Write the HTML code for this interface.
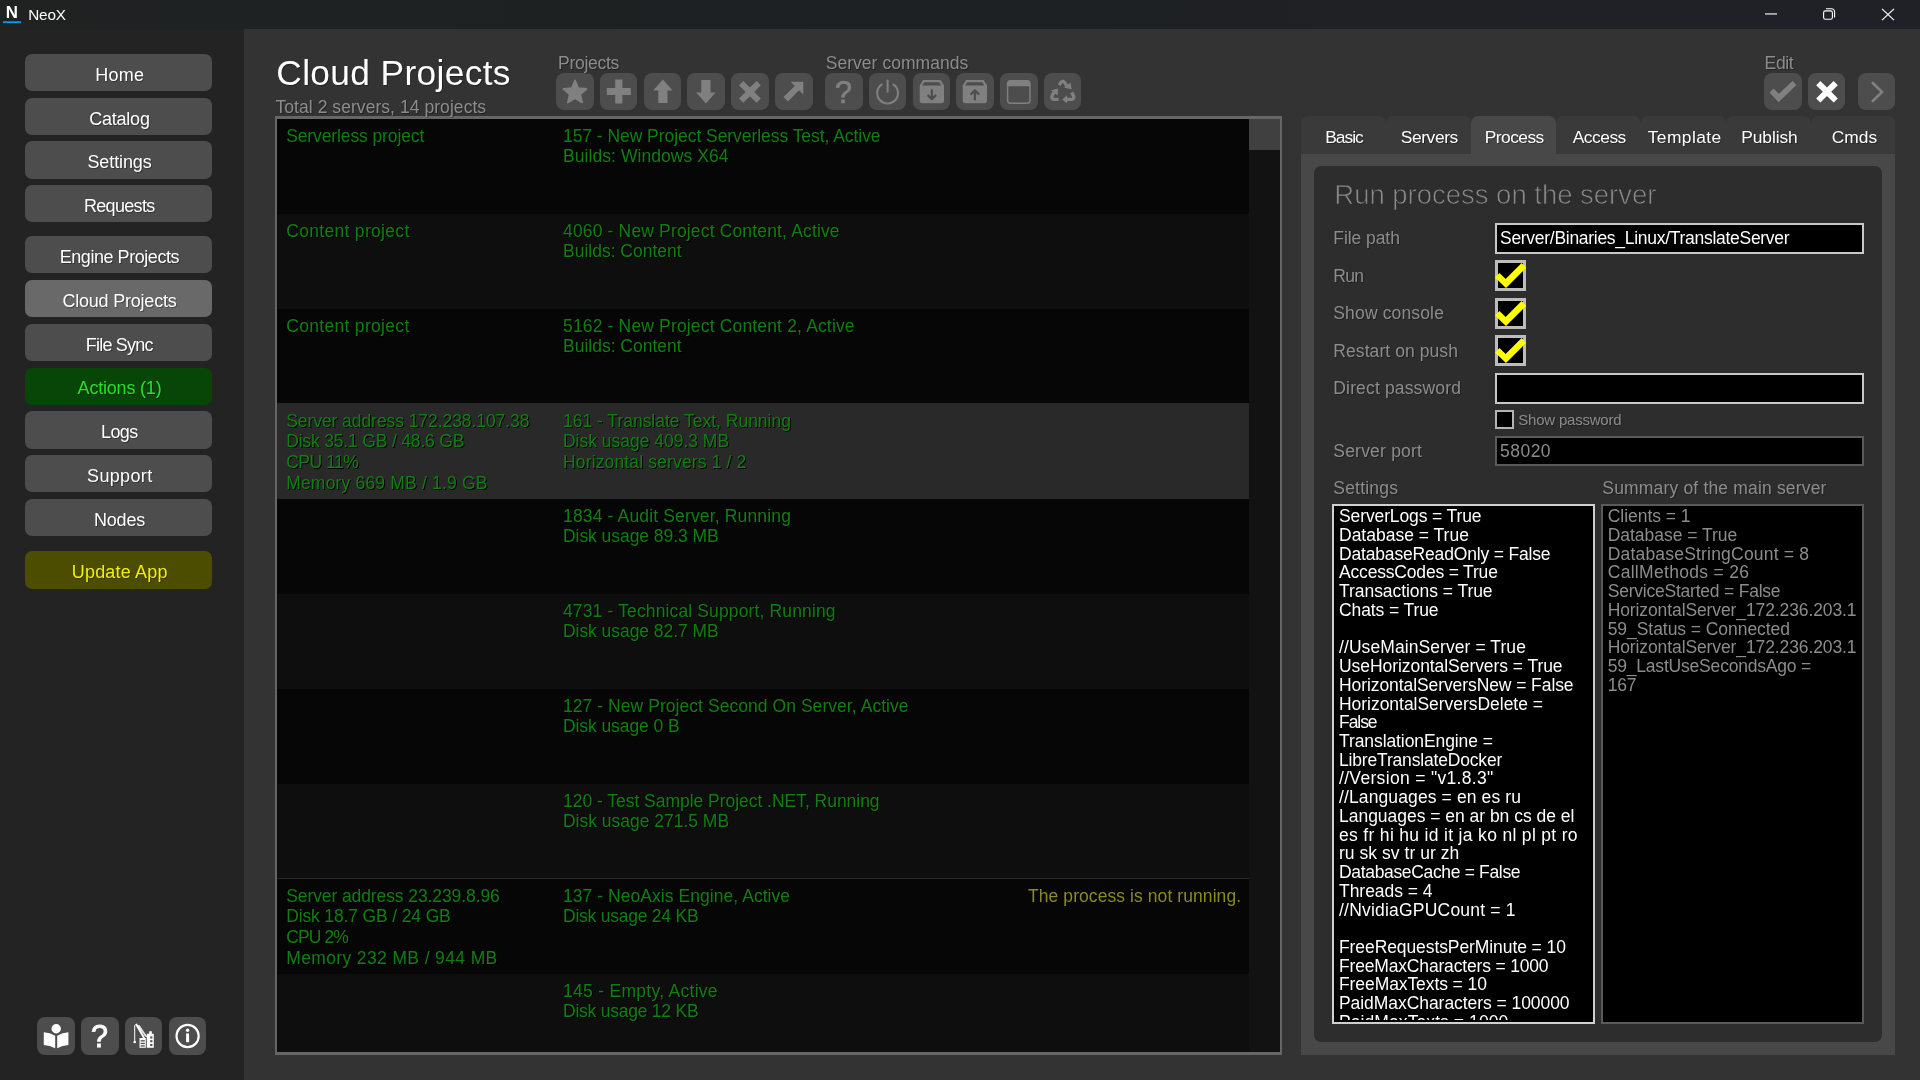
<!DOCTYPE html><html><head><meta charset="utf-8"><title>NeoX</title><style>

html,body{margin:0;padding:0;background:#333;width:1920px;height:1080px;overflow:hidden}
body{position:relative;font-family:"Liberation Sans", sans-serif;}
div,svg,span{position:absolute;}
span{white-space:pre;line-height:20px;}
span{text-shadow:1px 1px 0 rgba(0,0,0,0.32);}
span.sh{text-shadow:1px 1px 0 #000;}
span.ns{text-shadow:none;}
span.thin{-webkit-text-stroke:0.75px #2d2d2d;text-shadow:none;}

</style></head><body>
<div style="left:0px;top:0px;width:1920px;height:29px;background:linear-gradient(90deg,#1f2221 0,#1f2222 15%,#1e2124 50%,#202126 100%);"></div>
<div style="left:0px;top:29px;width:244px;height:1051px;background:#232323;"></div>
<div style="left:25px;top:54px;width:187px;height:37px;background:#4d4d4d;border-radius:7px;"></div>
<div style="left:25px;top:98px;width:187px;height:37px;background:#4d4d4d;border-radius:7px;"></div>
<div style="left:25px;top:141px;width:187px;height:38px;background:#4d4d4d;border-radius:7px;"></div>
<div style="left:25px;top:185px;width:187px;height:37px;background:#4d4d4d;border-radius:7px;"></div>
<div style="left:25px;top:236px;width:187px;height:37px;background:#4d4d4d;border-radius:7px;"></div>
<div style="left:25px;top:280px;width:187px;height:37px;background:#696969;border-radius:7px;"></div>
<div style="left:25px;top:324px;width:187px;height:37px;background:#4d4d4d;border-radius:7px;"></div>
<div style="left:25px;top:368px;width:187px;height:37px;background:#074607;border-radius:7px;"></div>
<div style="left:25px;top:411px;width:187px;height:38px;background:#4d4d4d;border-radius:7px;"></div>
<div style="left:25px;top:455px;width:187px;height:37px;background:#4d4d4d;border-radius:7px;"></div>
<div style="left:25px;top:499px;width:187px;height:37px;background:#4d4d4d;border-radius:7px;"></div>
<div style="left:25px;top:551px;width:187px;height:38px;background:#4d4d00;border-radius:7px;"></div>
<div style="left:37px;top:1017px;width:38px;height:38px;background:#4d4d4d;border-radius:8px;"></div>
<div style="left:81px;top:1017px;width:38px;height:38px;background:#4d4d4d;border-radius:8px;"></div>
<div style="left:125px;top:1017px;width:37px;height:38px;background:#4d4d4d;border-radius:8px;"></div>
<div style="left:169px;top:1017px;width:37px;height:38px;background:#4d4d4d;border-radius:8px;"></div>
<div style="left:556px;top:73px;width:37.5px;height:37px;background:#4d4d4d;border-radius:8px;"></div>
<div style="left:599.8px;top:73px;width:37.5px;height:37px;background:#4d4d4d;border-radius:8px;"></div>
<div style="left:643.6px;top:73px;width:37.5px;height:37px;background:#4d4d4d;border-radius:8px;"></div>
<div style="left:687.4px;top:73px;width:37.5px;height:37px;background:#4d4d4d;border-radius:8px;"></div>
<div style="left:731.2px;top:73px;width:37.5px;height:37px;background:#4d4d4d;border-radius:8px;"></div>
<div style="left:775px;top:73px;width:37.5px;height:37px;background:#4d4d4d;border-radius:8px;"></div>
<div style="left:825px;top:73px;width:37.5px;height:37px;background:#4d4d4d;border-radius:8px;"></div>
<div style="left:868.8px;top:73px;width:37.5px;height:37px;background:#4d4d4d;border-radius:8px;"></div>
<div style="left:912.5px;top:73px;width:37.5px;height:37px;background:#4d4d4d;border-radius:8px;"></div>
<div style="left:956.3px;top:73px;width:37.5px;height:37px;background:#4d4d4d;border-radius:8px;"></div>
<div style="left:1000px;top:73px;width:37.5px;height:37px;background:#4d4d4d;border-radius:8px;"></div>
<div style="left:1043.8px;top:73px;width:37.5px;height:37px;background:#4d4d4d;border-radius:8px;"></div>
<div style="left:1764px;top:73px;width:37.5px;height:37px;background:#4d4d4d;border-radius:8px;"></div>
<div style="left:1807.5px;top:73px;width:37.5px;height:37px;background:#4d4d4d;border-radius:8px;"></div>
<div style="left:1857.5px;top:73px;width:37.5px;height:37px;background:#4d4d4d;border-radius:8px;"></div>
<div style="left:275px;top:116px;width:1007px;height:939px;background:#666;"></div>
<div style="left:277px;top:119px;width:1003px;height:933px;background:#050505;"></div>
<div style="left:277px;top:119px;width:972px;height:95px;background:#060606;"></div>
<div style="left:277px;top:214px;width:972px;height:95px;background:#0e0e0e;"></div>
<div style="left:277px;top:309px;width:972px;height:95px;background:#060606;"></div>
<div style="left:277px;top:403px;width:972px;height:96px;background:#292929;"></div>
<div style="left:277px;top:499px;width:972px;height:95px;background:#060606;"></div>
<div style="left:277px;top:594px;width:972px;height:95px;background:#0e0e0e;"></div>
<div style="left:277px;top:689px;width:972px;height:95px;background:#060606;"></div>
<div style="left:277px;top:784px;width:972px;height:95px;background:#0e0e0e;"></div>
<div style="left:277px;top:879px;width:972px;height:95px;background:#060606;"></div>
<div style="left:277px;top:974px;width:972px;height:78px;background:#0e0e0e;"></div>
<div style="left:277px;top:878px;width:972px;height:1px;background:#2a2a2a;"></div>
<div style="left:1249px;top:119px;width:31px;height:933px;background:#121212;"></div>
<div style="left:1249px;top:119px;width:31px;height:31px;background:#404040;"></div>
<div style="left:1301px;top:154px;width:594px;height:901px;background:#484848;"></div>
<div style="left:1301px;top:116px;width:85px;height:38px;background:#3a3a3a;border-radius:7px 7px 0 0;"></div>
<div style="left:1386px;top:116px;width:85px;height:38px;background:#3a3a3a;border-radius:7px 7px 0 0;"></div>
<div style="left:1471px;top:116px;width:85px;height:38px;background:#484848;border-radius:7px 7px 0 0;"></div>
<div style="left:1556px;top:116px;width:85px;height:38px;background:#3a3a3a;border-radius:7px 7px 0 0;"></div>
<div style="left:1641px;top:116px;width:85px;height:38px;background:#3a3a3a;border-radius:7px 7px 0 0;"></div>
<div style="left:1726px;top:116px;width:85px;height:38px;background:#3a3a3a;border-radius:7px 7px 0 0;"></div>
<div style="left:1811px;top:116px;width:84px;height:38px;background:#3a3a3a;border-radius:7px 7px 0 0;"></div>
<div style="left:1314px;top:166px;width:568px;height:876px;background:#2d2d2d;border-radius:7px;"></div>
<div style="left:1495px;top:223px;width:369px;height:31px;background:#c8c8c8;"></div>
<div style="left:1497px;top:225px;width:365px;height:27px;background:#000;"></div>
<div style="left:1495px;top:260px;width:31px;height:31px;background:#bcbcbc;"></div>
<div style="left:1498px;top:263px;width:25px;height:25px;background:#000;"></div>
<div style="left:1495px;top:298px;width:31px;height:31px;background:#bcbcbc;"></div>
<div style="left:1498px;top:301px;width:25px;height:25px;background:#000;"></div>
<div style="left:1495px;top:335px;width:31px;height:31px;background:#bcbcbc;"></div>
<div style="left:1498px;top:338px;width:25px;height:25px;background:#000;"></div>
<div style="left:1495px;top:373px;width:369px;height:30.5px;background:#c8c8c8;"></div>
<div style="left:1497px;top:375px;width:365px;height:26.5px;background:#000;"></div>
<div style="left:1495px;top:410px;width:18.5px;height:19px;background:#b4b4b4;"></div>
<div style="left:1497px;top:412px;width:14.5px;height:15px;background:#000;"></div>
<div style="left:1495px;top:435.7px;width:369px;height:30px;background:#5a5a5a;"></div>
<div style="left:1497px;top:437.7px;width:365px;height:26px;background:#000;"></div>
<div style="left:1332px;top:504px;width:263px;height:519.5px;background:#d0d0d0;"></div>
<div style="left:1334px;top:506px;width:259px;height:515.5px;background:#000;"></div>
<div style="left:1601px;top:504px;width:263px;height:519.5px;background:#5a5a5a;"></div>
<div style="left:1603px;top:506px;width:259px;height:515.5px;background:#000;"></div>
<div style="left:0;top:0;width:1920px;height:1080px;will-change:transform">
<span id="t0" class="ns" style="top:4.70px;font-size:15.3px;color:#fff;letter-spacing:-0.222px;left:28.3px;">NeoX</span>
<span id="t1" class="" style="top:64.51px;font-size:18px;color:#fff;letter-spacing:0.195px;left:-30.3026px;width:300px;text-align:center;">Home</span>
<span id="t2" class="" style="top:108.51px;font-size:18px;color:#fff;letter-spacing:-0.241px;left:-30.5206px;width:300px;text-align:center;">Catalog</span>
<span id="t3" class="" style="top:151.51px;font-size:18px;color:#fff;letter-spacing:-0.100px;left:-30.4498px;width:300px;text-align:center;">Settings</span>
<span id="t4" class="" style="top:195.51px;font-size:18px;color:#fff;letter-spacing:-0.671px;left:-30.7355px;width:300px;text-align:center;">Requests</span>
<span id="t5" class="" style="top:246.51px;font-size:18px;color:#fff;letter-spacing:-0.445px;left:-30.6224px;width:300px;text-align:center;">Engine Projects</span>
<span id="t6" class="" style="top:290.51px;font-size:18px;color:#fff;letter-spacing:-0.209px;left:-30.5043px;width:300px;text-align:center;">Cloud Projects</span>
<span id="t7" class="" style="top:334.51px;font-size:18px;color:#fff;letter-spacing:-0.804px;left:-30.802px;width:300px;text-align:center;">File Sync</span>
<span id="t8" class="" style="top:377.56px;font-size:18px;color:#26e026;letter-spacing:-0.193px;left:-30.4966px;width:300px;text-align:center;">Actions (1)</span>
<span id="t9" class="" style="top:421.51px;font-size:18px;color:#fff;letter-spacing:-0.566px;left:-30.6828px;width:300px;text-align:center;">Logs</span>
<span id="t10" class="" style="top:465.51px;font-size:18px;color:#fff;letter-spacing:0.342px;left:-30.2289px;width:300px;text-align:center;">Support</span>
<span id="t11" class="" style="top:509.51px;font-size:18px;color:#fff;letter-spacing:-0.170px;left:-30.4852px;width:300px;text-align:center;">Nodes</span>
<span id="t12" class="" style="top:561.51px;font-size:18px;color:#f2f200;letter-spacing:0.169px;left:-30.3155px;width:300px;text-align:center;">Update App</span>
<span id="t13" class="light" style="top:62.77px;font-size:35.3px;color:#fff;letter-spacing:0.358px;left:276.3px;">Cloud Projects</span>
<span id="t14" class="" style="top:96.94px;font-size:17.5px;color:#8c8c8c;letter-spacing:0.055px;left:275.5px;">Total 2 servers, 14 projects</span>
<span id="t15" class="" style="top:52.94px;font-size:17.5px;color:#8c8c8c;letter-spacing:-0.274px;left:558px;">Projects</span>
<span id="t16" class="" style="top:52.94px;font-size:17.5px;color:#8c8c8c;letter-spacing:0.043px;left:825.7px;">Server commands</span>
<span id="t17" class="" style="top:53.24px;font-size:17.5px;color:#8c8c8c;letter-spacing:-0.352px;left:1764.6px;">Edit</span>
<span id="t18" class="sh" style="top:126.24px;font-size:17.5px;color:#0f800f;letter-spacing:-0.115px;left:286.2px;">Serverless project</span>
<span id="t19" class="sh" style="top:126.24px;font-size:17.5px;color:#0f800f;letter-spacing:-0.052px;left:563px;">157 - New Project Serverless Test, Active</span>
<span id="t20" class="sh" style="top:146.34px;font-size:17.5px;color:#0f800f;letter-spacing:0.067px;left:563px;">Builds: Windows X64</span>
<span id="t21" class="sh" style="top:221.24px;font-size:17.5px;color:#0f800f;letter-spacing:0.315px;left:286.2px;">Content project</span>
<span id="t22" class="sh" style="top:221.24px;font-size:17.5px;color:#0f800f;letter-spacing:0.158px;left:563px;">4060 - New Project Content, Active</span>
<span id="t23" class="sh" style="top:241.34px;font-size:17.5px;color:#0f800f;letter-spacing:-0.006px;left:563px;">Builds: Content</span>
<span id="t24" class="sh" style="top:316.24px;font-size:17.5px;color:#0f800f;letter-spacing:0.315px;left:286.2px;">Content project</span>
<span id="t25" class="sh" style="top:316.24px;font-size:17.5px;color:#0f800f;letter-spacing:0.160px;left:563px;">5162 - New Project Content 2, Active</span>
<span id="t26" class="sh" style="top:336.34px;font-size:17.5px;color:#0f800f;letter-spacing:-0.006px;left:563px;">Builds: Content</span>
<span id="t27" class="sh" style="top:411.24px;font-size:17.5px;color:#0f800f;letter-spacing:-0.067px;left:286.2px;">Server address 172.238.107.38</span>
<span id="t28" class="sh" style="top:431.34px;font-size:17.5px;color:#0f800f;letter-spacing:-0.171px;left:286.2px;">Disk 35.1 GB / 48.6 GB</span>
<span id="t29" class="sh" style="top:452.04px;font-size:17.5px;color:#0f800f;letter-spacing:-0.491px;left:286.2px;">CPU 11%</span>
<span id="t30" class="sh" style="top:472.94px;font-size:17.5px;color:#0f800f;letter-spacing:0.184px;left:286.2px;">Memory 669 MB / 1.9 GB</span>
<span id="t31" class="sh" style="top:411.24px;font-size:17.5px;color:#0f800f;letter-spacing:-0.014px;left:563px;">161 - Translate Text, Running</span>
<span id="t32" class="sh" style="top:431.34px;font-size:17.5px;color:#0f800f;letter-spacing:-0.014px;left:563px;">Disk usage 409.3 MB</span>
<span id="t33" class="sh" style="top:452.04px;font-size:17.5px;color:#0f800f;letter-spacing:0.146px;left:563px;">Horizontal servers 1 / 2</span>
<span id="t34" class="sh" style="top:506.24px;font-size:17.5px;color:#0f800f;letter-spacing:0.153px;left:563px;">1834 - Audit Server, Running</span>
<span id="t35" class="sh" style="top:526.34px;font-size:17.5px;color:#0f800f;letter-spacing:-0.059px;left:563px;">Disk usage 89.3 MB</span>
<span id="t36" class="sh" style="top:601.24px;font-size:17.5px;color:#0f800f;letter-spacing:0.137px;left:563px;">4731 - Technical Support, Running</span>
<span id="t37" class="sh" style="top:621.34px;font-size:17.5px;color:#0f800f;letter-spacing:-0.059px;left:563px;">Disk usage 82.7 MB</span>
<span id="t38" class="sh" style="top:696.24px;font-size:17.5px;color:#0f800f;letter-spacing:0.054px;left:563px;">127 - New Project Second On Server, Active</span>
<span id="t39" class="sh" style="top:716.34px;font-size:17.5px;color:#0f800f;letter-spacing:-0.085px;left:563px;">Disk usage 0 B</span>
<span id="t40" class="sh" style="top:791.24px;font-size:17.5px;color:#0f800f;letter-spacing:-0.031px;left:563px;">120 - Test Sample Project .NET, Running</span>
<span id="t41" class="sh" style="top:811.34px;font-size:17.5px;color:#0f800f;letter-spacing:-0.014px;left:563px;">Disk usage 271.5 MB</span>
<span id="t42" class="sh" style="top:886.24px;font-size:17.5px;color:#0f800f;letter-spacing:-0.095px;left:286.2px;">Server address 23.239.8.96</span>
<span id="t43" class="sh" style="top:906.34px;font-size:17.5px;color:#0f800f;letter-spacing:-0.142px;left:286.2px;">Disk 18.7 GB / 24 GB</span>
<span id="t44" class="sh" style="top:927.04px;font-size:17.5px;color:#0f800f;letter-spacing:-0.902px;left:286.2px;">CPU 2%</span>
<span id="t45" class="sh" style="top:947.94px;font-size:17.5px;color:#0f800f;letter-spacing:0.372px;left:286.2px;">Memory 232 MB / 944 MB</span>
<span id="t46" class="sh" style="top:886.24px;font-size:17.5px;color:#0f800f;letter-spacing:0.052px;left:563px;">137 - NeoAxis Engine, Active</span>
<span id="t47" class="sh" style="top:906.34px;font-size:17.5px;color:#0f800f;letter-spacing:-0.234px;left:563px;">Disk usage 24 KB</span>
<span id="t48" class="sh" style="top:981.24px;font-size:17.5px;color:#0f800f;letter-spacing:0.285px;left:563px;">145 - Empty, Active</span>
<span id="t49" class="sh" style="top:1001.34px;font-size:17.5px;color:#0f800f;letter-spacing:-0.234px;left:563px;">Disk usage 12 KB</span>
<span id="t50" class="sh" style="top:886.24px;font-size:17.5px;color:#8c8c1e;letter-spacing:0.077px;left:1028px;">The process is not running.</span>
<span id="t51" class="" style="top:126.97px;font-size:17.4px;color:#fff;letter-spacing:-0.983px;left:1194.01px;width:300px;text-align:center;">Basic</span>
<span id="t52" class="" style="top:126.97px;font-size:17.4px;color:#fff;letter-spacing:-0.387px;left:1279.31px;width:300px;text-align:center;">Servers</span>
<span id="t53" class="" style="top:126.97px;font-size:17.4px;color:#fff;letter-spacing:-0.538px;left:1364.23px;width:300px;text-align:center;">Process</span>
<span id="t54" class="" style="top:126.97px;font-size:17.4px;color:#fff;letter-spacing:-0.492px;left:1449.25px;width:300px;text-align:center;">Access</span>
<span id="t55" class="" style="top:126.97px;font-size:17.4px;color:#fff;letter-spacing:0.432px;left:1534.72px;width:300px;text-align:center;">Template</span>
<span id="t56" class="" style="top:126.97px;font-size:17.4px;color:#fff;letter-spacing:-0.074px;left:1619.46px;width:300px;text-align:center;">Publish</span>
<span id="t57" class="" style="top:126.97px;font-size:17.4px;color:#fff;letter-spacing:0.059px;left:1704.53px;width:300px;text-align:center;">Cmds</span>
<span id="t58" class="thin" style="top:184.67px;font-size:27.5px;color:#8a8a8a;letter-spacing:-0.018px;left:1334.3px;">Run process on the server</span>
<span id="t59" class="" style="top:228.24px;font-size:17.5px;color:#8c8c8c;letter-spacing:-0.066px;left:1333.3px;">File path</span>
<span id="t60" class="" style="top:265.94px;font-size:17.5px;color:#8c8c8c;letter-spacing:-0.755px;left:1333.3px;">Run</span>
<span id="t61" class="" style="top:303.24px;font-size:17.5px;color:#8c8c8c;letter-spacing:0.148px;left:1333.3px;">Show console</span>
<span id="t62" class="" style="top:340.94px;font-size:17.5px;color:#8c8c8c;letter-spacing:0.075px;left:1333.3px;">Restart on push</span>
<span id="t63" class="" style="top:378.24px;font-size:17.5px;color:#8c8c8c;letter-spacing:0.152px;left:1333.3px;">Direct password</span>
<span id="t64" class="" style="top:440.94px;font-size:17.5px;color:#8c8c8c;letter-spacing:0.204px;left:1333.3px;">Server port</span>
<span id="t65" class="" style="top:477.94px;font-size:17.5px;color:#8c8c8c;letter-spacing:0.195px;left:1333.3px;">Settings</span>
<span id="t66" class="" style="top:477.94px;font-size:17.5px;color:#8c8c8c;letter-spacing:0.172px;left:1602.3px;">Summary of the main server</span>
<span id="t67" class="" style="top:228.24px;font-size:17.5px;color:#fff;letter-spacing:-0.286px;left:1500px;">Server/Binaries_Linux/TranslateServer</span>
<span id="t68" class="" style="top:409.50px;font-size:15px;color:#8c8c8c;letter-spacing:-0.216px;left:1518.3px;">Show password</span>
<span id="t69" class="" style="top:440.94px;font-size:17.5px;color:#8c8c8c;letter-spacing:0.482px;left:1500px;">58020</span>
<span id="t70" class="" style="top:506.24px;font-size:17.5px;color:#fff;letter-spacing:-0.116px;left:1339px;">ServerLogs = True</span>
<span id="t71" class="" style="top:524.97px;font-size:17.5px;color:#fff;letter-spacing:0.002px;left:1339px;">Database = True</span>
<span id="t72" class="" style="top:543.70px;font-size:17.5px;color:#fff;letter-spacing:-0.168px;left:1339px;">DatabaseReadOnly = False</span>
<span id="t73" class="" style="top:562.43px;font-size:17.5px;color:#fff;letter-spacing:-0.180px;left:1339px;">AccessCodes = True</span>
<span id="t74" class="" style="top:581.16px;font-size:17.5px;color:#fff;letter-spacing:-0.050px;left:1339px;">Transactions = True</span>
<span id="t75" class="" style="top:599.89px;font-size:17.5px;color:#fff;letter-spacing:-0.099px;left:1339px;">Chats = True</span>
<span id="t76" class="" style="top:637.35px;font-size:17.5px;color:#fff;letter-spacing:0.077px;left:1339px;">//UseMainServer = True</span>
<span id="t77" class="" style="top:656.08px;font-size:17.5px;color:#fff;letter-spacing:-0.060px;left:1339px;">UseHorizontalServers = True</span>
<span id="t78" class="" style="top:674.81px;font-size:17.5px;color:#fff;letter-spacing:-0.083px;left:1339px;">HorizontalServersNew = False</span>
<span id="t79" class="" style="top:693.54px;font-size:17.5px;color:#fff;letter-spacing:-0.035px;left:1339px;">HorizontalServersDelete =</span>
<span id="t80" class="" style="top:712.27px;font-size:17.5px;color:#fff;letter-spacing:-1.049px;left:1339px;">False</span>
<span id="t81" class="" style="top:731.00px;font-size:17.5px;color:#fff;letter-spacing:-0.089px;left:1339px;">TranslationEngine =</span>
<span id="t82" class="" style="top:749.73px;font-size:17.5px;color:#fff;letter-spacing:-0.177px;left:1339px;">LibreTranslateDocker</span>
<span id="t83" class="" style="top:768.46px;font-size:17.5px;color:#fff;letter-spacing:0.324px;left:1339px;">//Version = &quot;v1.8.3&quot;</span>
<span id="t84" class="" style="top:787.19px;font-size:17.5px;color:#fff;letter-spacing:0.114px;left:1339px;">//Languages = en es ru</span>
<span id="t85" class="" style="top:805.92px;font-size:17.5px;color:#fff;letter-spacing:-0.023px;left:1339px;">Languages = en ar bn cs de el</span>
<span id="t86" class="" style="top:824.65px;font-size:17.5px;color:#fff;letter-spacing:0.323px;left:1339px;">es fr hi hu id it ja ko nl pl pt ro</span>
<span id="t87" class="" style="top:843.38px;font-size:17.5px;color:#fff;letter-spacing:0.043px;left:1339px;">ru sk sv tr ur zh</span>
<span id="t88" class="" style="top:862.11px;font-size:17.5px;color:#fff;letter-spacing:-0.333px;left:1339px;">DatabaseCache = False</span>
<span id="t89" class="" style="top:880.84px;font-size:17.5px;color:#fff;letter-spacing:-0.028px;left:1339px;">Threads = 4</span>
<span id="t90" class="" style="top:899.57px;font-size:17.5px;color:#fff;letter-spacing:0.208px;left:1339px;">//NvidiaGPUCount = 1</span>
<span id="t91" class="" style="top:937.03px;font-size:17.5px;color:#fff;letter-spacing:-0.088px;left:1339px;">FreeRequestsPerMinute = 10</span>
<span id="t92" class="" style="top:955.76px;font-size:17.5px;color:#fff;letter-spacing:-0.170px;left:1339px;">FreeMaxCharacters = 1000</span>
<span id="t93" class="" style="top:974.49px;font-size:17.5px;color:#fff;letter-spacing:-0.087px;left:1339px;">FreeMaxTexts = 10</span>
<span id="t94" class="" style="top:993.22px;font-size:17.5px;color:#fff;letter-spacing:-0.057px;left:1339px;">PaidMaxCharacters = 100000</span>
<span id="t95" class="" style="top:1011.95px;font-size:17.5px;color:#fff;letter-spacing:0.083px;left:1339px;">PaidMaxTexts = 1000</span>
<span id="t96" class="" style="top:506.24px;font-size:17.5px;color:#8c8c8c;letter-spacing:-0.027px;left:1607.7px;">Clients = 1</span>
<span id="t97" class="" style="top:524.97px;font-size:17.5px;color:#8c8c8c;letter-spacing:-0.020px;left:1607.7px;">Database = True</span>
<span id="t98" class="" style="top:543.70px;font-size:17.5px;color:#8c8c8c;letter-spacing:0.195px;left:1607.7px;">DatabaseStringCount = 8</span>
<span id="t99" class="" style="top:562.43px;font-size:17.5px;color:#8c8c8c;letter-spacing:0.307px;left:1607.7px;">CallMethods = 26</span>
<span id="t100" class="" style="top:581.16px;font-size:17.5px;color:#8c8c8c;letter-spacing:-0.220px;left:1607.7px;">ServiceStarted = False</span>
<span id="t101" class="" style="top:599.89px;font-size:17.5px;color:#8c8c8c;letter-spacing:-0.106px;left:1607.7px;">HorizontalServer_172.236.203.1</span>
<span id="t102" class="" style="top:618.62px;font-size:17.5px;color:#8c8c8c;letter-spacing:-0.055px;left:1607.7px;">59_Status = Connected</span>
<span id="t103" class="" style="top:637.35px;font-size:17.5px;color:#8c8c8c;letter-spacing:-0.106px;left:1607.7px;">HorizontalServer_172.236.203.1</span>
<span id="t104" class="" style="top:656.08px;font-size:17.5px;color:#8c8c8c;letter-spacing:-0.196px;left:1607.7px;">59_LastUseSecondsAgo =</span>
<span id="t105" class="" style="top:674.81px;font-size:17.5px;color:#8c8c8c;letter-spacing:-0.152px;left:1607.7px;">167</span>
<svg style="left:3px;top:4px" width="20" height="20" viewBox="0 0 20 20"><text x="8.85" y="14" font-family='"Liberation Sans",sans-serif' font-weight="bold" font-size="15.6" text-anchor="middle" fill="#fff" textLength="12.2" lengthAdjust="spacingAndGlyphs">N</text><rect x="0" y="17.3" width="18" height="1.8" fill="#0a9bf0"/></svg>
<svg style="left:1765px;top:13px" width="12" height="2" viewBox="0 0 12 2"><rect x="0" y="0.4" width="12" height="1.1" fill="#fff"/></svg>
<svg style="left:1823px;top:8px" width="14" height="13" viewBox="0 0 14 13"><rect x="0.6" y="2.9" width="8.8" height="8.4" rx="1.9" fill="none" stroke="#fff" stroke-width="1.1"/><path d="M3 0.8h5.6a3 3 0 0 1 3 3v5.6" fill="none" stroke="#fff" stroke-width="1.1"/></svg>
<svg style="left:1881px;top:8px" width="14" height="13" viewBox="0 0 14 13"><path d="M1 0.8L13 12.2M13 0.8L1 12.2" stroke="#fff" stroke-width="1.15" fill="none"/></svg>
<svg style="left:1495px;top:260px" width="32" height="31" viewBox="0 0 32 31"><path d="M0 17.5L4.5 13.1L10.6 19L26.6 3.1L31.1 7.9L11 28.1z" fill="#ffff00"/></svg>
<svg style="left:1495px;top:298px" width="32" height="31" viewBox="0 0 32 31"><path d="M0 17.5L4.5 13.1L10.6 19L26.6 3.1L31.1 7.9L11 28.1z" fill="#ffff00"/></svg>
<svg style="left:1495px;top:335px" width="32" height="31" viewBox="0 0 32 31"><path d="M0 17.5L4.5 13.1L10.6 19L26.6 3.1L31.1 7.9L11 28.1z" fill="#ffff00"/></svg>
<svg style="left:556px;top:73px" width="37.5" height="37.5" viewBox="0 0 37.5 37.5"><polygon points="19.00,7.30 22.29,15.07 30.70,15.80 24.33,21.33 26.23,29.55 19.00,25.20 11.77,29.55 13.67,21.33 7.30,15.80 15.71,15.07" fill="#808080" stroke="#808080" stroke-width="1.6" stroke-linejoin="round"/></svg>
<svg style="left:599.8px;top:73px" width="37.5" height="37.5" viewBox="0 0 37.5 37.5"><path d="M15.2 6.5h7.2v8.4h8.4v7.2h-8.4v8.4h-7.2v-8.4H6.8v-7.2h8.4z" fill="#808080"/></svg>
<svg style="left:643.6px;top:73px" width="37.5" height="37.5" viewBox="0 0 37.5 37.5"><path d="M18.9 6.5L28.6 17.4H23.5V30H14.3V17.4H9.2z" fill="#808080"/></svg>
<svg style="left:687.4px;top:73px" width="37.5" height="37.5" viewBox="0 0 37.5 37.5"><path d="M18.9 30.5L28.6 19.6H23.5V7H14.3V19.6H9.2z" fill="#808080"/></svg>
<svg style="left:731.2px;top:73px" width="37.5" height="37.5" viewBox="0 0 37.5 37.5"><path d="M8 12.3L12.3 8L18.9 14.6L25.5 8L29.8 12.3L23.2 18.9L29.8 25.5L25.5 29.8L18.9 23.2L12.3 29.8L8 25.5L14.6 18.9z" fill="#808080"/></svg>
<svg style="left:775px;top:73px" width="37.5" height="37.5" viewBox="0 0 37.5 37.5"><path d="M15.5 8.7H28.3V21.5L24 17.2L13 28.5L8.5 24L19.8 13z" fill="#808080"/></svg>
<svg style="left:825px;top:73px" width="37.5" height="37.5" viewBox="0 0 37.5 37.5"><text x="18.4" y="29.7" font-family='"Liberation Sans",sans-serif' font-size="30.5" text-anchor="middle" fill="#808080" stroke="#808080" stroke-width="0.7">?</text></svg>
<svg style="left:868.8px;top:73px" width="37.5" height="37.5" viewBox="0 0 37.5 37.5"><path d="M12.6 11.6A10.4 10.4 0 1 0 24.6 11.6" fill="none" stroke="#808080" stroke-width="2.1" stroke-linecap="round"/><path d="M18.6 7.5V18.6" stroke="#808080" stroke-width="2.1" stroke-linecap="round"/></svg>
<svg style="left:912.5px;top:73px" width="37.5" height="37.5" viewBox="0 0 37.5 37.5"><path d="M10 7H27.5L31 12.5V27.5a2.7 2.7 0 0 1-2.7 2.7H9.4a2.7 2.7 0 0 1-2.7-2.7V12.5z" fill="#808080"/><path d="M11.2 9.3H26.3L28.3 12.6H9.2z" fill="#4d4d4d"/><path d="M18.85 17V26M15.2 22.6L18.85 26.2L22.5 22.6" fill="none" stroke="#4d4d4d" stroke-width="2.2" stroke-linecap="round" stroke-linejoin="round"/></svg>
<svg style="left:956.3px;top:73px" width="37.5" height="37.5" viewBox="0 0 37.5 37.5"><path d="M10 7H27.5L31 12.5V27.5a2.7 2.7 0 0 1-2.7 2.7H9.4a2.7 2.7 0 0 1-2.7-2.7V12.5z" fill="#808080"/><path d="M11.2 9.3H26.3L28.3 12.6H9.2z" fill="#4d4d4d"/><path d="M18.85 26.6V17.6M15.2 21L18.85 17.4L22.5 21" fill="none" stroke="#4d4d4d" stroke-width="2.2" stroke-linecap="round" stroke-linejoin="round"/></svg>
<svg style="left:1000px;top:73px" width="37.5" height="37.5" viewBox="0 0 37.5 37.5"><rect x="7.6" y="7.6" width="22.4" height="22.6" rx="3" fill="none" stroke="#808080" stroke-width="1.4"/><path d="M7.6 13.2V10.6a3 3 0 0 1 3-3H27a3 3 0 0 1 3 3V13.2z" fill="#808080"/></svg>
<svg style="left:1043.8px;top:73px" width="37.5" height="37.5" viewBox="0 0 37.5 37.5"><g fill="none" stroke="#808080" stroke-width="3.3" stroke-linejoin="round"><path d="M15.2 12.2L17.2 9.2Q18.8 7.2 20.4 9.2L23.4 14"/><path d="M27.6 19.4L29.6 22.8Q30.6 26 27.4 26.4H22.6"/><path d="M14.6 26.4H10.2Q7 26 8 22.8L10.4 18.8"/></g><g fill="#808080"><path d="M20.2 14.8L27.6 16.2L26.6 9.4z"/><path d="M23.2 22.2V30.6L18.2 26.4z"/><path d="M7 17.2L14.2 15.4L13.6 22.4z"/></g></svg>
<svg style="left:1764px;top:73px" width="37.5" height="37.5" viewBox="0 0 37.5 37.5"><path d="M5.5 19.5L9.6 15.4L14.8 20.8L28.6 8L32.4 12L14.6 29.2z" fill="#808080"/></svg>
<svg style="left:1807.5px;top:73px" width="37.5" height="37.5" viewBox="0 0 37.5 37.5"><path d="M8.2 12.2L12.4 8L19 14.6L25.6 8L29.8 12.2L23.2 18.8L29.8 25.4L25.6 29.6L19 23L12.4 29.6L8.2 25.4L14.8 18.8z" fill="#fff"/></svg>
<svg style="left:1857.5px;top:73px" width="37.5" height="37.5" viewBox="0 0 37.5 37.5"><path d="M14 9.3L24 19L14 28.7" fill="none" stroke="#808080" stroke-width="2.6"/></svg>
<svg style="left:37px;top:1017px" width="38" height="38" viewBox="0 0 38 38"><circle cx="19.2" cy="11.7" r="4.7" fill="#fff"/><path d="M6.8 15.2Q13 15.4 18.2 18.8V31.2Q13 28.2 6.8 28z" fill="#fff"/><path d="M31.4 15.2Q25.4 15.4 20.2 18.8V31.2Q25.4 28.2 31.4 28z" fill="#fff"/></svg>
<svg style="left:81px;top:1017px" width="38" height="38" viewBox="0 0 38 38"><text x="18.6" y="30.4" font-family='"Liberation Sans",sans-serif' font-size="30.5" text-anchor="middle" fill="#fff" stroke="#fff" stroke-width="0.9">?</text></svg>
<svg style="left:125px;top:1017px" width="38" height="38" viewBox="0 0 38 38"><g fill="#fff"><path d="M10 7.2L12 6.6L20 21H18z"/><path d="M9.2 8.2H10.2V24H9.2z"/><circle cx="9.7" cy="25" r="1.3"/><path d="M12 8.5L14.5 8L22.5 20H20.5z" opacity="0.85"/><path d="M14.5 21H20.8V30.8H14.5z"/><path d="M21.8 16.8H24.2V14.2H26.8V16.8H28.8V30.8H21.8z"/></g><g fill="#4d4d4d"><rect x="15.6" y="23.2" width="4.2" height="1.3"/><rect x="15.6" y="25.8" width="4.2" height="1.3"/><rect x="15.6" y="28.3" width="4.2" height="1.3"/><rect x="25.2" y="19.5" width="2.2" height="2"/><rect x="25.2" y="23.2" width="2.2" height="2"/><rect x="25.2" y="27" width="2.2" height="2"/></g></svg>
<svg style="left:169px;top:1017px" width="38" height="38" viewBox="0 0 38 38"><circle cx="18.6" cy="19" r="11.1" fill="none" stroke="#fff" stroke-width="2.2"/><circle cx="18.6" cy="13.3" r="1.7" fill="#fff"/><rect x="17.1" y="16.4" width="3" height="8.8" fill="#fff"/></svg>
</div>
<div style="left:1334px;top:1020.4px;width:259px;height:1.2px;background:#000;"></div>
<div style="left:1332px;top:1021.5px;width:263px;height:2px;background:#d0d0d0;"></div>
<div style="left:1332px;top:1023.5px;width:263px;height:18.5px;background:#2d2d2d;"></div>
</body></html>
